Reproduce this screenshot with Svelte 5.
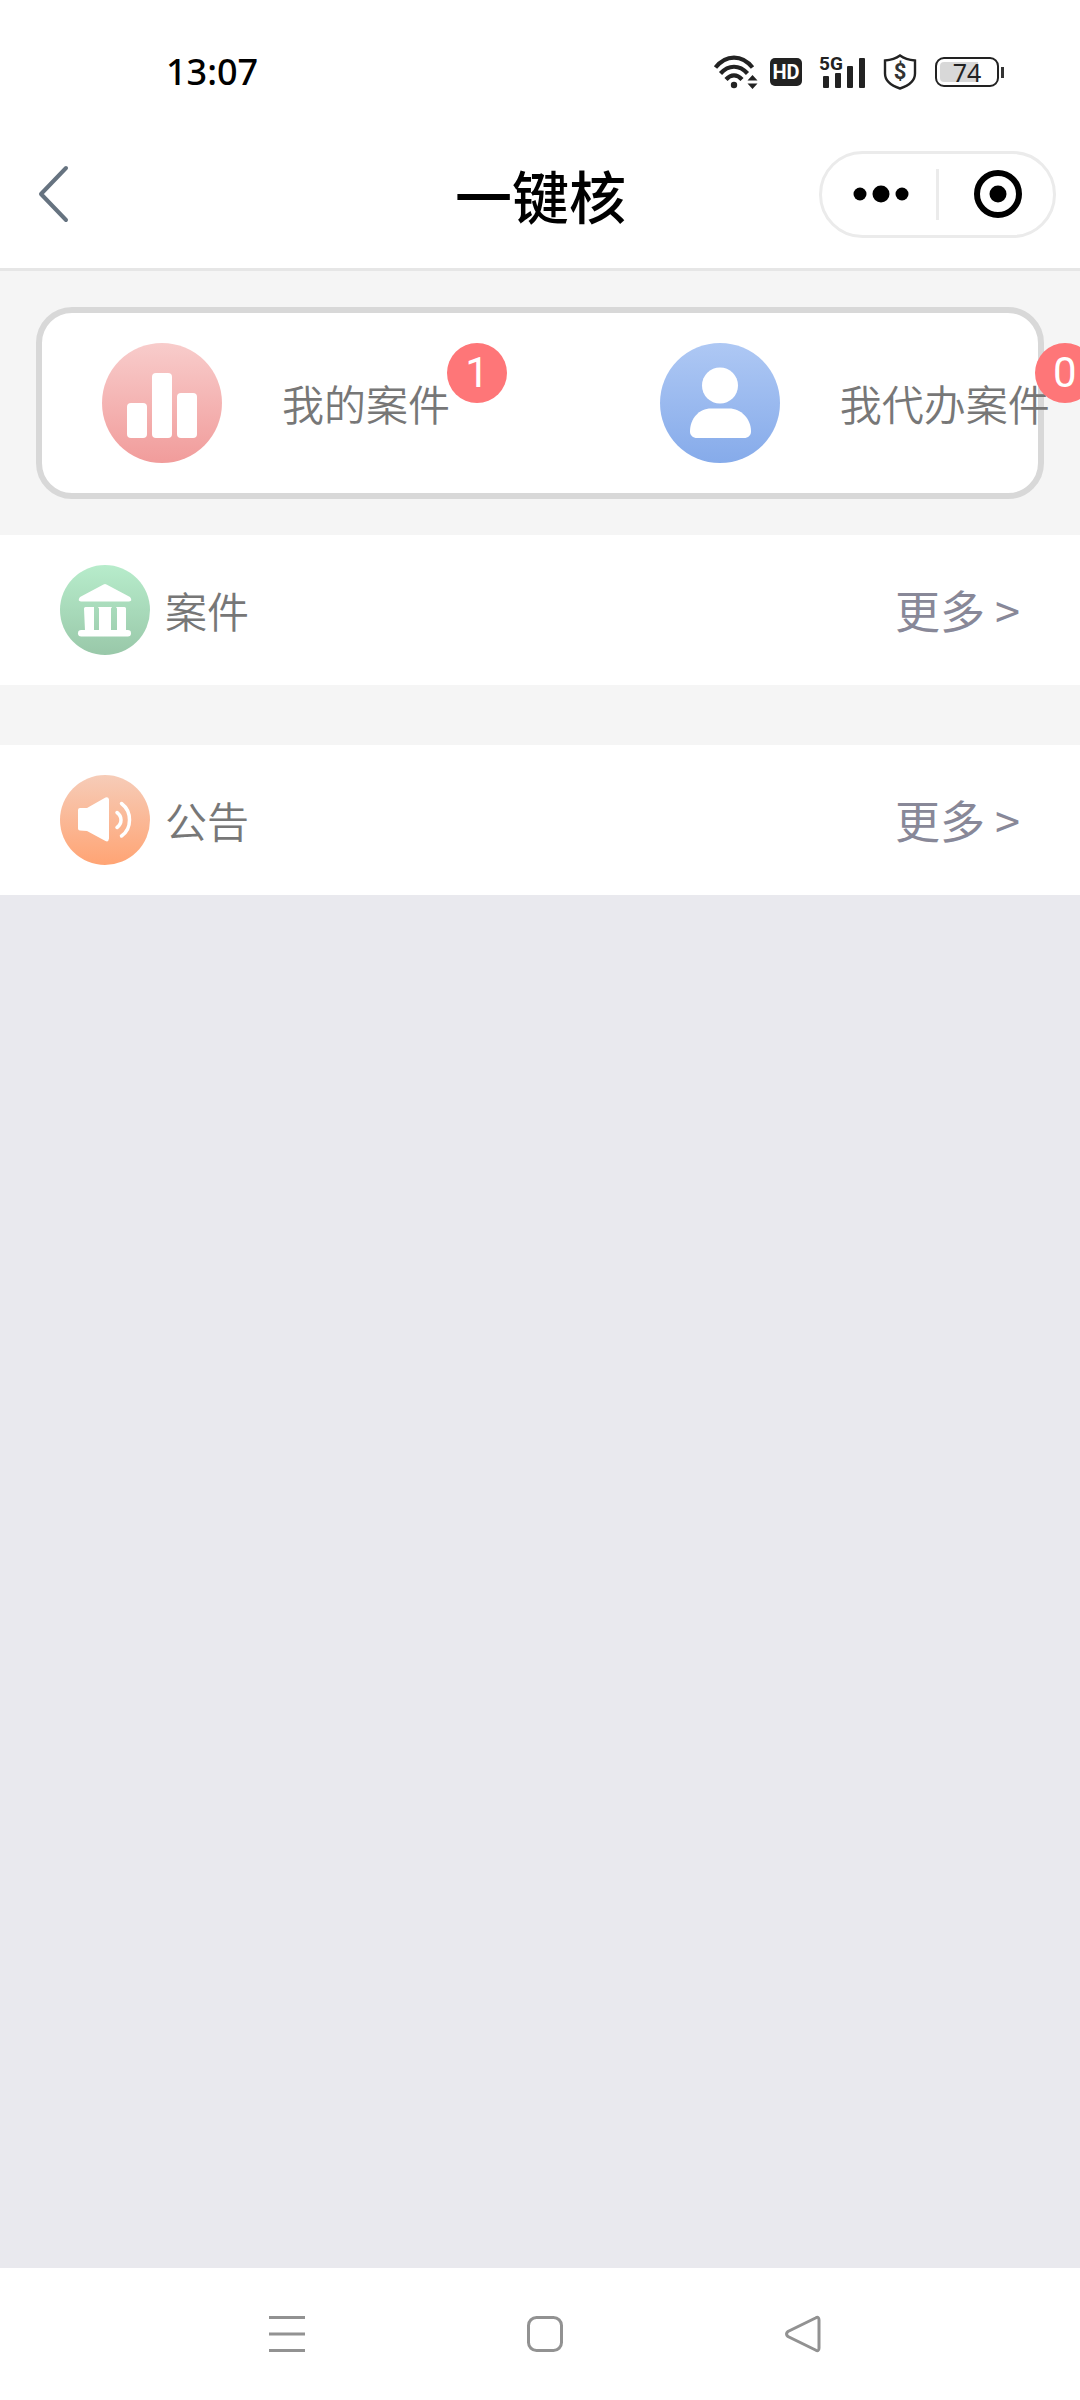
<script>
  const stats = [
    { id: 'mine', label: '我的案件', count: 1 },
    { id: 'agent', label: '我代办案件', count: 0 }
  ];

  const sections = [
    { id: 'cases', title: '案件' },
    { id: 'notices', title: '公告' }
  ];
</script>

<div class="page">
  <div class="status-bar">
    <span class="time">13:07</span>
    <div class="status-icons">
      <svg class="wifi" viewBox="0 0 44 34" width="44" height="34">
        <g fill="none" stroke="#222" stroke-width="4.200">
          <path d="M1.500 12.500C12-.8 28-.8 38.500 12.500" />
          <path d="M6.500 18.500c8-9 19-9 27 0" />
          <path d="M12 24.500c5-5.500 11-5.500 16 0" />
        </g>
        <circle cx="20" cy="30" r="3.200" fill="#222" />
        <path d="M38.500 20l5 5.500h-10zM38.500 34l5-5.500h-10z" fill="#222" />
      </svg>
      <span class="hd">HD</span>
      <svg class="signal" viewBox="0 0 46 34" width="46" height="34">
        <text x="0" y="15" class="net">5G</text>
        <g fill="#222">
          <rect x="4" y="21" width="6" height="12" rx="1" />
          <rect x="16" y="18" width="6" height="15" rx="1" />
          <rect x="28" y="11" width="6" height="22" rx="1" />
          <rect x="40" y="3" width="6" height="30" rx="1" />
        </g>
      </svg>
      <svg class="shield" viewBox="0 0 34 36" width="34" height="36">
        <path d="M17 1.500c4 3 9 4.500 15 5v13c0 7-6 12-15 15-9-3-15-8-15-15v-13c6-.5 11-2 15-5z" fill="none" stroke="#222" stroke-width="2.400" />
        <text x="17" y="25" text-anchor="middle" class="dollar">$</text>
      </svg>
      <div class="battery">
        <span class="level">74</span>
      </div>
    </div>
  </div>

  <header>
    <button class="back" aria-label="返回">
      <svg viewBox="0 0 32 58" width="32" height="58">
        <path d="M29 3L4 29l25 26" fill="none" stroke="#667380" stroke-width="4" stroke-linecap="round" stroke-linejoin="round" />
      </svg>
    </button>
    <h1>一键核</h1>
    <div class="capsule">
      <button aria-label="更多">
        <svg viewBox="0 0 56 18" width="56" height="18">
          <circle cx="7" cy="9" r="6.500" />
          <circle cx="28" cy="9" r="8.500" />
          <circle cx="49" cy="9" r="6.500" />
        </svg>
      </button>
      <span class="divider"></span>
      <button aria-label="关闭">
        <svg viewBox="0 0 48 48" width="48" height="48">
          <circle cx="24" cy="24" r="21" fill="none" stroke="#000" stroke-width="6" />
          <circle cx="24" cy="24" r="8.500" />
        </svg>
      </button>
    </div>
  </header>

  <main>
    <div class="summary">
      <div class="stats">
        {#each stats as item}
          <a class="stat {item.id}" href="#{item.id}">
            <svg viewBox="0 0 120 120" width="120" height="120">
              {#if item.id === 'mine'}
                <linearGradient id="red" x1="0" y1="0" x2="0" y2="1">
                  <stop offset="0" stop-color="#f8cccb" />
                  <stop offset="1" stop-color="#f19c9b" />
                </linearGradient>
                <circle cx="60" cy="60" r="60" fill="url(#red)" />
                <g fill="#fff">
                  <rect x="25" y="60" width="20" height="35" rx="4" />
                  <rect x="50" y="30" width="20" height="65" rx="4" />
                  <rect x="75" y="50" width="20" height="45" rx="4" />
                </g>
              {:else}
                <linearGradient id="blue" x1="0" y1="0" x2="0" y2="1">
                  <stop offset="0" stop-color="#aec8f4" />
                  <stop offset="1" stop-color="#86abea" />
                </linearGradient>
                <circle cx="60" cy="60" r="60" fill="url(#blue)" />
                <circle cx="60" cy="42.500" r="18" fill="#fff" />
                <path d="M51 65.500h18c12 0 22 10 22 23 0 4-3 6.500-7 6.500H37c-4 0-7-2.500-7-6.500 0-13 9-23 21-23z" fill="#fff" />
              {/if}
            </svg>
            <span class="label">{item.label}</span>
            <span class="badge">{item.count}</span>
          </a>
        {/each}
      </div>
    </div>

    {#each sections as section}
      <section>
        <svg viewBox="0 0 90 90" width="90" height="90">
          {#if section.id === 'cases'}
            <linearGradient id="green" x1="0" y1="0" x2="0" y2="1">
              <stop offset="0" stop-color="#b7eccb" />
              <stop offset="1" stop-color="#99c8a9" />
            </linearGradient>
            <circle cx="45" cy="45" r="45" fill="url(#green)" />
            <g fill="#fff">
              <path d="M43.500 19.500q1.500-1 3 0L70 32q3 4-1 4.500H21q-4-.5-1-4.500z" />
              <path d="M24 43.500q0-1.500 1.500-1.500H34v24h-9zM38 42h14l-1 1.500V66H39V43.500zM56 42h8.500q1.500 0 1.500 1.500V66h-9V43.500z" />
              <rect x="18" y="65" width="53" height="6.500" rx="3.200" />
            </g>
          {:else}
            <linearGradient id="orange" x1="0" y1="0" x2="0" y2="1">
              <stop offset="0" stop-color="#f6ccb8" />
              <stop offset="1" stop-color="#ffa474" />
            </linearGradient>
            <circle cx="45" cy="45" r="45" fill="url(#orange)" />
            <path d="M20 33h7l18.500-10.500q3-1 3.500 2v39q-.5 4-3.500 2.500L27 56l-7-.5q-2 0-2-2V35q0-2 2-2z" fill="#fff" />
            <g fill="none" stroke="#fff" stroke-width="3.500" stroke-linecap="round">
              <path d="M57 37.500q4 3 4 7.500t-4 7.500" />
              <path d="M61.500 28.500q8 6 8 16.500t-8 16" />
            </g>
          {/if}
        </svg>
        <h2>{section.title}</h2>
        <a class="more" href="#{section.id}">更多 &gt;</a>
      </section>
    {/each}
  </main>

  <nav>
    <button aria-label="最近任务">
      <svg viewBox="0 0 36 36" width="36" height="36">
        <path d="M0 1.500h36M0 18h36M0 34.500h36" />
      </svg>
    </button>
    <button aria-label="主屏幕">
      <svg viewBox="0 0 36 36" width="36" height="36">
        <rect x="1.500" y="1.500" width="33" height="33" rx="8" />
      </svg>
    </button>
    <button aria-label="返回上一页">
      <svg viewBox="0 0 36 36" width="36" height="36">
        <path d="M30.500 2Q34 0 34 4v28q0 4-3.500 2L3 20.500Q0 18 3 15.500z" />
      </svg>
    </button>
  </nav>
</div>

<style>
  :global(body) {
    margin: 0;
    background: #e9e9ee;
  }

  .page {
    display: flex;
    flex-direction: column;
    min-height: 100vh;
    overflow-x: hidden;
    font-family: "Noto Sans CJK SC", sans-serif;
    color: #777;
  }

  svg {
    display: block;
    flex: none;
    overflow: visible;
  }

  button {
    display: flex;
    padding: 0;
    border: 0;
    background: none;
  }

  a {
    color: inherit;
    text-decoration: none;
  }

  .status-bar {
    display: flex;
    align-items: center;
    justify-content: space-between;
    height: 144px;
    padding: 0 76px 0 166px;
    box-sizing: border-box;
    background: #fff;
    color: #000;
  }

  .time {
    font: 500 36px/48px "Noto Sans", sans-serif;
  }

  .status-icons {
    display: flex;
    align-items: center;
  }

  .hd {
    width: 32px;
    margin: 0 17px 0 12px;
    border-radius: 5px;
    background: #222;
    color: #fff;
    font: 700 20px/28px Roboto, sans-serif;
    text-align: center;
  }

  .net {
    font: 700 19px Roboto, sans-serif;
    fill: #222;
  }

  .shield {
    margin: 0 18px;
  }

  .dollar {
    font: 700 22px Roboto, sans-serif;
    fill: #333;
  }

  .battery {
    display: flex;
    align-items: center;
  }

  .battery::after {
    content: "";
    width: 3px;
    height: 11px;
    margin-left: 2px;
    background: #333;
  }

  .level {
    width: 54px;
    padding: 3px;
    border: 2px solid #222;
    border-radius: 9px;
    background: linear-gradient(90deg, #d8d8d8 70%, #fff 70%) content-box;
    color: #222;
    font: 400 25px/20px "Noto Sans", sans-serif;
    text-align: center;
  }

  header {
    display: grid;
    grid-template-columns: 1fr auto 1fr;
    align-items: center;
    height: 127px;
    padding: 0 24px 24px 37px;
    box-sizing: border-box;
    border-bottom: 3px solid #e6e6e6;
    background: #fff;
  }

  .back {
    justify-self: start;
  }

  h1 {
    margin: 0;
    padding-right: 12px;
    color: #000;
    font-size: 57px;
    line-height: 87px;
    font-weight: 500;
  }

  .capsule {
    display: flex;
    align-items: center;
    justify-self: end;
    width: 237px;
    height: 87px;
    box-sizing: border-box;
    border: 3px solid #ebebeb;
    border-radius: 44px;
  }

  .capsule button {
    flex: 1;
    justify-content: center;
    padding-left: 4px;
  }

  .divider {
    width: 3px;
    height: 51px;
    background: #ebebeb;
  }

  main {
    flex: 1;
  }

  .summary {
    padding: 36px;
    background: #f5f5f5;
  }

  .stats {
    display: flex;
    height: 192px;
    box-sizing: border-box;
    border: 6px solid #d8d8d8;
    border-radius: 36px;
    background: #fff;
  }

  .stat {
    position: relative;
    display: flex;
    align-items: center;
    flex: none;
    width: 56%;
    box-sizing: border-box;
    padding-left: 60px;
  }

  .label {
    margin-left: 60px;
    font-size: 42px;
    line-height: 60px;
    font-weight: 350;
    white-space: nowrap;
  }

  .badge {
    position: absolute;
    top: 30px;
    left: 405px;
    width: 60px;
    border-radius: 50%;
    background: #fe7678;
    color: #fff;
    font: 400 42px/60px Roboto, sans-serif;
    text-align: center;
  }

  .agent .badge {
    left: 435px;
  }

  section {
    display: flex;
    align-items: center;
    height: 150px;
    padding: 0 60px;
    background: #fff;
  }

  section + section {
    border-top: 60px solid #f5f5f5;
  }

  h2 {
    margin: 0 0 0 15px;
    font-size: 42px;
    line-height: 60px;
    font-weight: 350;
  }

  .more {
    margin-left: auto;
    color: #888898;
    font-size: 45px;
    line-height: 60px;
  }

  nav {
    display: flex;
    align-items: center;
    justify-content: center;
    gap: 222px;
    height: 132px;
    padding-left: 10px;
    background: #fff;
  }

  nav svg {
    fill: none;
    stroke: #929292;
    stroke-width: 3;
  }
</style>
